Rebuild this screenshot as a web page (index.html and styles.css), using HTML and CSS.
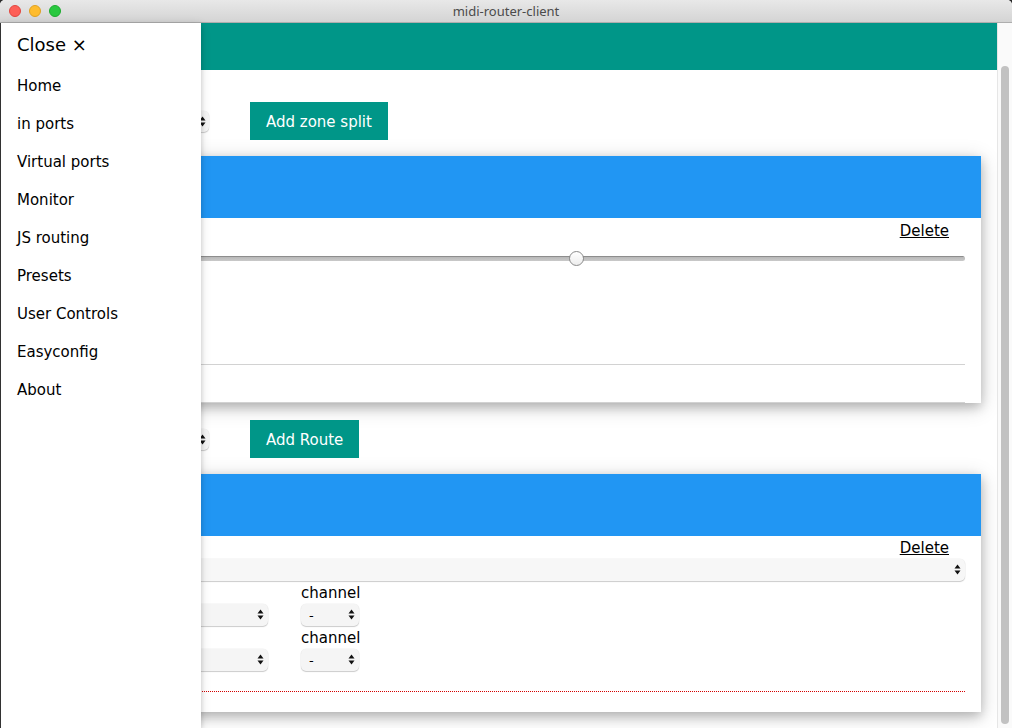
FILE: index.html
```html
<!DOCTYPE html>
<html lang="en">
<head>
<meta charset="utf-8">
<title>midi-router-client</title>
<link rel="stylesheet" href="styles.css">
</head>
<body>
<div class="window">
  <div class="titlebar">
    <div class="lights">
      <span class="light red"></span>
      <span class="light yellow"></span>
      <span class="light green"></span>
    </div>
    <div class="title">midi-router-client</div>
  </div>

  <div class="viewport">
    <main class="page">
      <header class="topbar"></header>

      <div class="toolbar first">
        <span class="select tool-select">
          <select><option>Split</option></select>
          <svg class="arrows" viewBox="0 0 7 11" width="7" height="11"><polygon points="0.5,4.5 3.5,0.5 6.5,4.5"/><polygon points="0.5,6.5 3.5,10.5 6.5,6.5"/></svg>
        </span>
        <button class="btn">Add zone split</button>
      </div>

      <section class="card split-card">
        <div class="card-head"></div>
        <div class="card-body">
          <div class="delete-row"><a href="#" class="delete">Delete</a></div>
          <input class="slider" type="range" min="0" max="127" step="any" value="74.2">
          <div class="split-info"></div>
          <hr class="rule">
          <hr class="rule last">
        </div>
      </section>

      <div class="toolbar second">
        <span class="select tool-select">
          <select><option>Port</option></select>
          <svg class="arrows" viewBox="0 0 7 11" width="7" height="11"><polygon points="0.5,4.5 3.5,0.5 6.5,4.5"/><polygon points="0.5,6.5 3.5,10.5 6.5,6.5"/></svg>
        </span>
        <button class="btn">Add Route</button>
      </div>

      <section class="card route-card">
        <div class="card-head"></div>
        <div class="card-body">
          <div class="delete-row"><a href="#" class="delete">Delete</a></div>
          <span class="select full-select">
            <select><option></option></select>
            <svg class="arrows" viewBox="0 0 7 11" width="7" height="11"><polygon points="0.5,4.5 3.5,0.5 6.5,4.5"/><polygon points="0.5,6.5 3.5,10.5 6.5,6.5"/></svg>
          </span>
          <div class="route-row">
            <div class="field">
              <div class="label">in</div>
              <span class="select">
                <select><option></option></select>
                <svg class="arrows" viewBox="0 0 7 11" width="7" height="11"><polygon points="0.5,4.5 3.5,0.5 6.5,4.5"/><polygon points="0.5,6.5 3.5,10.5 6.5,6.5"/></svg>
              </span>
            </div>
            <div class="field">
              <div class="label">channel</div>
              <span class="select">
                <select><option>-</option></select>
                <svg class="arrows" viewBox="0 0 7 11" width="7" height="11"><polygon points="0.5,4.5 3.5,0.5 6.5,4.5"/><polygon points="0.5,6.5 3.5,10.5 6.5,6.5"/></svg>
              </span>
            </div>
          </div>
          <div class="route-row">
            <div class="field">
              <div class="label">out</div>
              <span class="select">
                <select><option></option></select>
                <svg class="arrows" viewBox="0 0 7 11" width="7" height="11"><polygon points="0.5,4.5 3.5,0.5 6.5,4.5"/><polygon points="0.5,6.5 3.5,10.5 6.5,6.5"/></svg>
              </span>
            </div>
            <div class="field">
              <div class="label">channel</div>
              <span class="select">
                <select><option>-</option></select>
                <svg class="arrows" viewBox="0 0 7 11" width="7" height="11"><polygon points="0.5,4.5 3.5,0.5 6.5,4.5"/><polygon points="0.5,6.5 3.5,10.5 6.5,6.5"/></svg>
              </span>
            </div>
          </div>
          <hr class="dotted">
        </div>
      </section>
    </main>

    <div class="scrollbar"><div class="thumb"></div></div>

    <nav class="sidebar">
      <a href="#" class="nav-item close">Close &times;</a>
      <a href="#" class="nav-item">Home</a>
      <a href="#" class="nav-item">in ports</a>
      <a href="#" class="nav-item">Virtual ports</a>
      <a href="#" class="nav-item">Monitor</a>
      <a href="#" class="nav-item">JS routing</a>
      <a href="#" class="nav-item">Presets</a>
      <a href="#" class="nav-item">User Controls</a>
      <a href="#" class="nav-item">Easyconfig</a>
      <a href="#" class="nav-item">About</a>
    </nav>
  </div>
</div>
</body>
</html>
```

FILE: styles.css
```css
* { box-sizing: border-box; }

html, body {
  margin: 0;
  padding: 0;
  width: 1012px;
  height: 728px;
  overflow: hidden;
  background: #2a2a2a;
}

body {
  font-family: "DejaVu Sans", Verdana, sans-serif;
  font-size: 15px;
  line-height: 1.5;
  color: #000;
}

.window {
  width: 1012px;
  height: 728px;
  border-radius: 5px 5px 0 0;
  overflow: hidden;
  display: flex;
  flex-direction: column;
  background: #fff;
}

/* ---------- title bar ---------- */
.titlebar {
  position: relative;
  height: 23px;
  flex: none;
  background: linear-gradient(#e8e8e8, #d4d4d4);
  border-bottom: 1px solid #aeaeae;
  display: flex;
  align-items: center;
  justify-content: center;
}

.lights {
  position: absolute;
  left: 9px;
  top: 5px;
  display: flex;
  gap: 8px;
}

.light {
  width: 12px;
  height: 12px;
  border-radius: 50%;
}
.light.red { background: #fd5f57; border: 0.5px solid #e1463f; }
.light.yellow { background: #febc2e; border: 0.5px solid #dea123; }
.light.green { background: #29c840; border: 0.5px solid #1dab2f; }

.title {
  font-family: "Noto Sans", "Liberation Sans", sans-serif;
  font-size: 13px;
  line-height: 22px;
  color: #4b4b4b;
}

/* ---------- viewport ---------- */
.viewport {
  position: relative;
  flex: 1;
  display: flex;
  border-left: 1px solid #3a3a3a;
  min-height: 0;
}

.page {
  flex: 1;
  overflow: hidden;
  background: #fff;
}

.topbar {
  height: 47px;
  background: #009688;
}

.toolbar {
  display: flex;
  align-items: center;
  padding: 0 16px 16px;
}
.toolbar.first { padding-top: 32px; }
.toolbar.second { padding-top: 17px; }

.btn {
  font-family: inherit;
  font-size: 15px;
  line-height: 22px;
  padding: 9px 16px 7px;
  border: none;
  background: #009688;
  color: #fff;
  cursor: pointer;
}

/* ---------- selects ---------- */
.select {
  position: relative;
  display: inline-block;
  height: 22px;
}

.select select {
  -webkit-appearance: none;
  appearance: none;
  display: block;
  width: 100%;
  height: 22px;
  margin: 0;
  border: none;
  border-radius: 5px;
  background: #f5f5f5;
  box-shadow: 0 1px 1px rgba(0, 0, 0, 0.18), 0 0 0 0.5px rgba(0, 0, 0, 0.06);
  font-family: "DejaVu Sans", Verdana, sans-serif;
  font-size: 13px;
  color: #000;
  padding: 0 20px 0 8px;
}

.select .arrows {
  position: absolute;
  right: 4px;
  top: 5px;
  fill: #111;
  pointer-events: none;
}

.tool-select {
  width: 192px;
  height: 21px;
  margin-right: 41px;
}
.tool-select select { height: 21px; }
.tool-select .arrows { right: 3px; top: 5px; }

.full-select {
  display: block;
  width: 100%;
}
.full-select select { background: #f7f7f7; }

/* ---------- cards ---------- */
.card {
  margin: 0 16px;
  background: #fff;
  box-shadow: 0 4px 10px 0 rgba(0, 0, 0, 0.2), 0 4px 20px 0 rgba(0, 0, 0, 0.19);
}

.card-head {
  height: 62px;
  background: #2196f3;
}

.card-body {
  padding: 0 16px;
}

.delete-row {
  height: 23px;
  text-align: right;
  padding-right: 16px;
  padding-top: 1px;
  line-height: 22px;
}
.split-card .delete-row { padding-top: 3px; line-height: 20px; }

.delete {
  color: #000;
  text-decoration: underline;
}

/* slider */
.slider {
  -webkit-appearance: none;
  appearance: none;
  display: block;
  width: 100%;
  height: 16px;
  margin: 9px 0 0;
  padding: 0;
  background: transparent;
}
.slider::-webkit-slider-runnable-track {
  height: 5px;
  border-radius: 3px;
  background: linear-gradient(#8d8d8d 0, #8d8d8d 1px, #b8b8b8 1px, #c9c9c9 100%);
}
.slider::-webkit-slider-thumb {
  -webkit-appearance: none;
  appearance: none;
  width: 15px;
  height: 15px;
  margin-top: -5px;
  border-radius: 50%;
  background: linear-gradient(#ffffff, #ededed);
  border: 1px solid #8a8a8a;
}

.split-info {
  height: 98px;
}

.rule {
  margin: 0;
  border: none;
  border-top: 1px solid #d2d2d2;
}
.rule.last {
  margin-top: 37px;
}

/* route rows */
.route-row {
  display: grid;
  grid-template-columns: 235px 58px;
  column-gap: 33px;
}

.field {
  display: flex;
  flex-direction: column;
}

.label {
  height: 23px;
  padding-top: 2px;
  line-height: 21px;
  white-space: nowrap;
}

.field .select { width: 100%; }

.dotted {
  margin: 20px 0 0;
  padding-bottom: 20px;
  border: none;
  border-top: 1px dotted #d40000;
}

/* ---------- scrollbar ---------- */
.scrollbar {
  width: 15px;
  flex: none;
  background: #fafafa;
  border-left: 1px solid #e6e6e6;
  padding: 43px 3px 4px 3px;
  display: flex;
}
.thumb {
  flex: 1;
  border-radius: 4px;
  background: #c2c2c2;
}

/* ---------- sidebar ---------- */
.sidebar {
  position: absolute;
  left: 0;
  top: 0;
  bottom: 0;
  width: 200px;
  background: #fff;
  box-shadow: 0 2px 5px 0 rgba(0, 0, 0, 0.16), 0 2px 10px 0 rgba(0, 0, 0, 0.12);
  display: flex;
  flex-direction: column;
  z-index: 5;
}

.nav-item {
  display: block;
  padding: 8px 16px;
  line-height: 22px;
  font-size: 15px;
  color: #000;
  text-decoration: none;
  white-space: nowrap;
}

.nav-item.close {
  font-size: 18px;
  line-height: 28px;
}
```
